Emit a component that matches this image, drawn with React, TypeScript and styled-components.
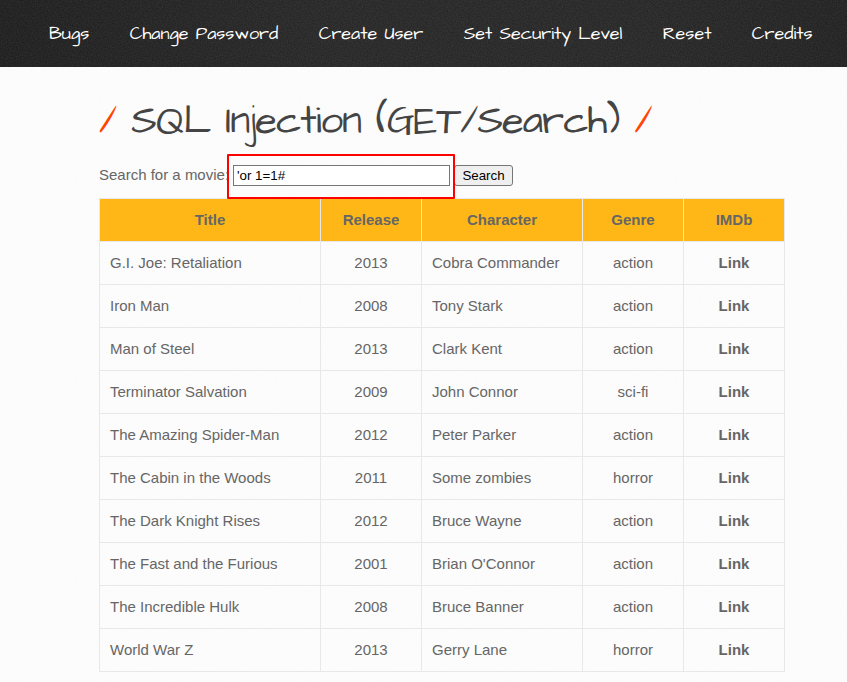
import React from "react";
import styled, { createGlobalStyle } from "styled-components";

const grain = (strength: number, tone: number) =>
  `url("data:image/svg+xml,${encodeURIComponent(
    `<svg xmlns='http://www.w3.org/2000/svg' width='200' height='200'><filter id='n' x='0' y='0' width='100%' height='100%'><feTurbulence type='fractalNoise' baseFrequency='0.8' numOctaves='2' stitchTiles='stitch'/><feColorMatrix values='0 0 0 0 ${tone} 0 0 0 0 ${tone} 0 0 0 0 ${tone} ${strength} 0 0 0 0'/></filter><rect width='200' height='200' filter='url(#n)'/></svg>`
  )}")`;

const GlobalStyle = createGlobalStyle`
  * { box-sizing: border-box; }
  html, body { margin: 0; height: 100%; overflow: hidden; }
  body {
    background: ${grain(0.03, 0.4)} #fdfdfd;
    color: #666;
    font: 15px/22px "Liberation Sans", Arial, sans-serif;
  }
`;

const handwriting = `"Architects Daughter", cursive`;

const Menu = styled.nav`
  height: 67px;
  padding-left: 49px;
  display: flex;
  gap: 40.4px;
  align-items: center;
  background:
    ${grain(0.12, 1)},
    radial-gradient(ellipse 560px 260px at 480px 30px, #202020 30%, #151515 100%);
`;

const MenuLink = styled.a`
  color: #fff;
  font: 400 18px/22px ${handwriting};
  white-space: nowrap;
`;

const Main = styled.main`
  width: 686px;
  margin-left: 99px;
`;

const Title = styled.h1`
  height: 58px;
  margin: 25px 0 0;
  color: #444;
  font: 400 40px/60px ${handwriting};
  letter-spacing: -1px;
  white-space: nowrap;
`;

const Slash = styled.span`
  color: #ff4500;
`;

const SearchForm = styled.form`
  height: 48px;
  display: flex;
  align-items: center;
  position: relative;
`;

const Label = styled.label`
  width: 134px;
  margin-top: 1px;
`;

const SearchInput = styled.input`
  width: 217px;
  height: 21px;
  margin: 3px 5px 0 0;
  padding: 1px 3px;
  border: 1px solid #767676;
  border-radius: 0;
  background: #fff;
  color: #000;
  font: 13.333px "Liberation Sans", Arial, sans-serif;
`;

const SearchButton = styled.button`
  width: 59px;
  height: 21px;
  margin: 3px 0 0 -1px;
  padding: 0;
  border: 1px solid #767676;
  border-radius: 3px;
  background: #efefef;
  color: #000;
  font: 13.333px "Liberation Sans", Arial, sans-serif;
`;

const Highlight = styled.div`
  position: absolute;
  left: 128px;
  top: 4px;
  width: 228px;
  height: 45px;
  border: 2px solid #ff0000;
  border-radius: 1px;
  z-index: 1;
  pointer-events: none;
`;

const Table = styled.table`
  width: 686px;
  table-layout: fixed;
  border-collapse: collapse;
`;

const Col = styled.col<{ $w: number }>`
  width: ${(p) => p.$w}px;
`;

const Head = styled.th`
  height: 43px;
  padding: 0 10px;
  border: 1px solid #e8e8e8;
  background: #ffb717;
  background-clip: padding-box;
`;

const Cell = styled.td<{ $center?: boolean; $bold?: boolean }>`
  height: 43px;
  padding: 0 10px;
  border: 1px solid #e8e8e8;
  text-align: ${(p) => (p.$center ? "center" : "left")};
  font-weight: ${(p) => (p.$bold ? 700 : 400)};
`;

const menu = ["Bugs", "Change Password", "Create User", "Set Security Level", "Reset", "Credits"];

const movies = [
  ["G.I. Joe: Retaliation", "2013", "Cobra Commander", "action"],
  ["Iron Man", "2008", "Tony Stark", "action"],
  ["Man of Steel", "2013", "Clark Kent", "action"],
  ["Terminator Salvation", "2009", "John Connor", "sci-fi"],
  ["The Amazing Spider-Man", "2012", "Peter Parker", "action"],
  ["The Cabin in the Woods", "2011", "Some zombies", "horror"],
  ["The Dark Knight Rises", "2012", "Bruce Wayne", "action"],
  ["The Fast and the Furious", "2001", "Brian O'Connor", "action"],
  ["The Incredible Hulk", "2008", "Bruce Banner", "action"],
  ["World War Z", "2013", "Gerry Lane", "horror"],
];

export default function App() {
  return (
    <>
      <GlobalStyle />
      <Menu>
        {menu.map((text) => (
          <MenuLink key={text}>{text}</MenuLink>
        ))}
      </Menu>
      <Main>
        <Title>
          <Slash>/</Slash> SQL Injection (GET/Search) <Slash>/</Slash>
        </Title>
        <SearchForm onSubmit={(e) => e.preventDefault()}>
          <Label htmlFor="title">Search for a movie:</Label>
          <SearchInput id="title" defaultValue="'or 1=1#" />
          <SearchButton>Search</SearchButton>
          <Highlight />
        </SearchForm>
        <Table>
          <colgroup>
            {[221, 101, 161, 101, 101].map((w, i) => <Col key={i} $w={w} />)}
          </colgroup>
          <thead>
            <tr>
              {["Title", "Release", "Character", "Genre", "IMDb"].map((h) => <Head key={h}>{h}</Head>)}
            </tr>
          </thead>
          <tbody>
            {movies.map(([title, year, character, genre]) => (
              <tr key={title}>
                <Cell>{title}</Cell>
                <Cell $center>{year}</Cell>
                <Cell>{character}</Cell>
                <Cell $center>{genre}</Cell>
                <Cell $center $bold>Link</Cell>
              </tr>
            ))}
          </tbody>
        </Table>
      </Main>
    </>
  );
}
